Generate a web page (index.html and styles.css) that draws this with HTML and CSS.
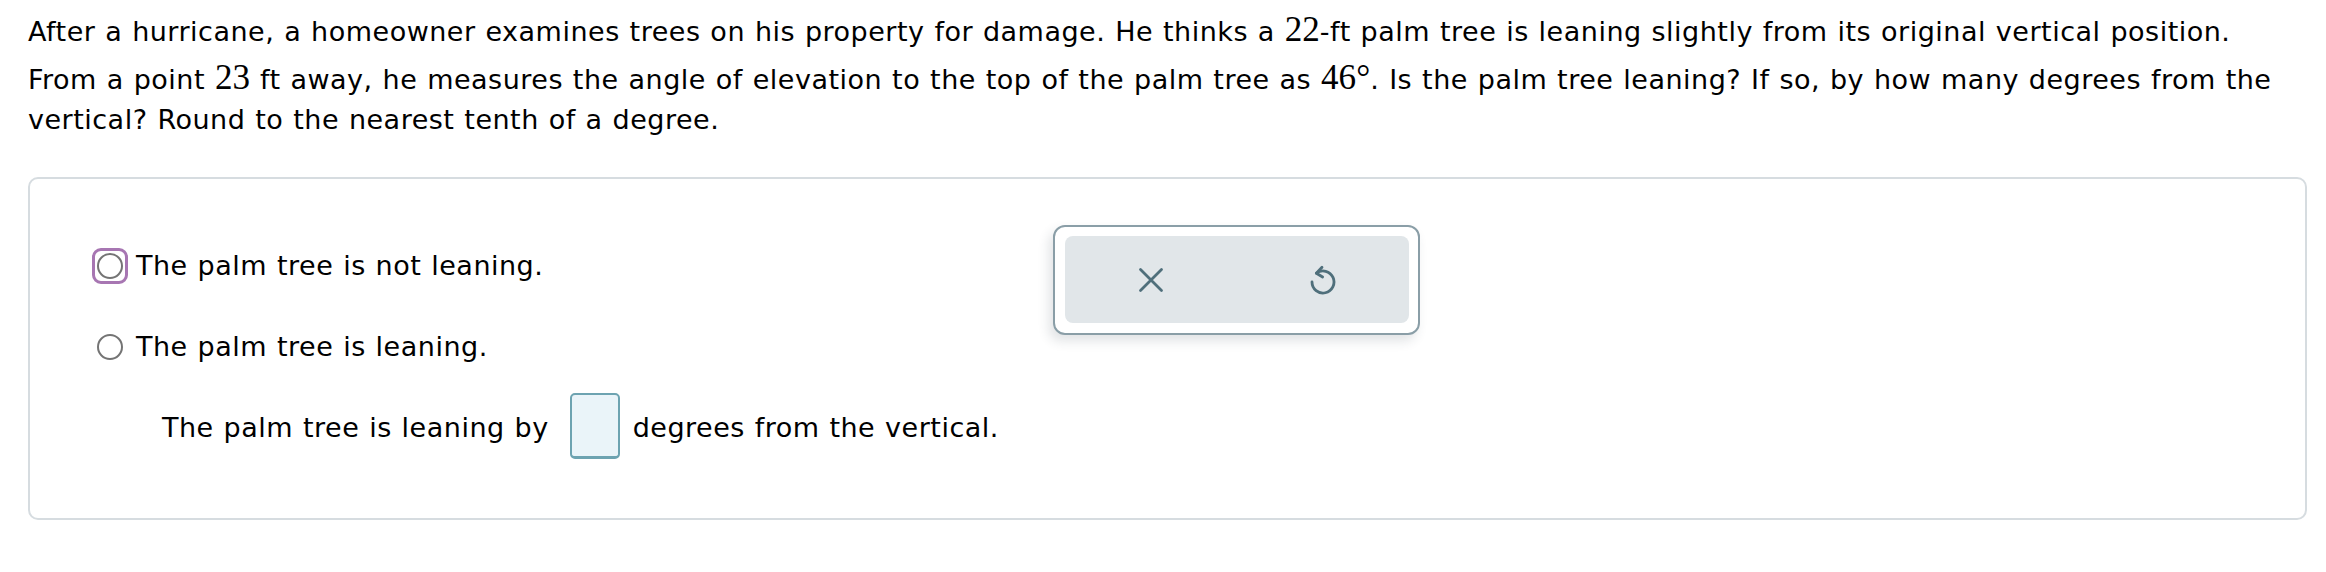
FILE: index.html
```html
<!DOCTYPE html>
<html lang="en">
<head>
<meta charset="utf-8">
<title>Palm tree question</title>
<link rel="stylesheet" href="styles.css">
</head>
<body>
<main class="page">
  <p class="question">After a hurricane, a homeowner examines trees on his property for damage. He thinks a <span class="math">22</span>-ft palm tree is leaning slightly from its original vertical position. From a point <span class="math raised">23</span> ft away, he measures the angle of elevation to the top of the palm tree as <span class="math raised">46°</span>. Is the palm tree leaning? If so, by how many degrees from the vertical? Round to the nearest tenth of a degree.</p>

  <section class="card">
    <div class="choices">
      <label class="choice">
        <span class="radio focused"><span class="circle"></span></span>
        <span class="choice-text">The palm tree is not leaning.</span>
      </label>
      <label class="choice second">
        <span class="radio"><span class="circle"></span></span>
        <span class="choice-text">The palm tree is leaning.</span>
      </label>
      <div class="answer-row">
        <span>The palm tree is leaning by</span>
        <span class="answer-box"></span>
        <span>degrees from the vertical.</span>
      </div>
    </div>

    <div class="toolbar">
      <div class="toolbar-inner">
        <button class="tool" aria-label="Clear">
          <svg width="26" height="26" viewBox="0 0 26 26"><path d="M2.5 2.5 L23.5 23.5 M23.5 2.5 L2.5 23.5" fill="none" stroke="#4f6f7b" stroke-width="2.8" stroke-linecap="round"/></svg>
        </button>
        <button class="tool" aria-label="Undo">
          <svg width="30" height="34" viewBox="0 0 30 34"><path d="M8.4 10.2 A11 11 0 1 1 4 19" fill="none" stroke="#4f6f7b" stroke-width="2.8" stroke-linecap="round"/><path d="M14 4.2 L8.4 10.2 L14.6 14" fill="none" stroke="#4f6f7b" stroke-width="2.8" stroke-linecap="round" stroke-linejoin="round"/></svg>
        </button>
      </div>
    </div>
  </section>
</main>
</body>
</html>
```

FILE: styles.css
```css
html, body {
  margin: 0;
  padding: 0;
  background: #ffffff;
}

body {
  font-family: "DejaVu Sans", Verdana, sans-serif;
  font-size: 27px;
  letter-spacing: 0.5px;
  color: #000000;
}

.page {
  padding: 12px 19px 0 28px;
}

.question {
  margin: 0;
  line-height: 40px;
  word-spacing: 0.8px;
}

.math {
  display: inline-block;
  font-family: "Liberation Serif", "Times New Roman", serif;
  font-size: 1.3em;
  line-height: 1;
  letter-spacing: 0;
  word-spacing: 0;
}

.raised {
  padding-top: 8px;
}

.card {
  margin-top: 37px;
  height: 339px;
  border: 2px solid #d6dce0;
  border-radius: 10px;
  display: flex;
  align-items: flex-start;
}

.choices {
  width: 961px;
  flex: none;
  padding: 69px 0 0 62px;
  display: flex;
  flex-direction: column;
}

.choice {
  display: flex;
  align-items: center;
  height: 36px;
  gap: 8px;
  line-height: 40px;
  word-spacing: 0.8px;
}

.choice.second {
  margin-top: 45px;
}

.radio {
  width: 36px;
  height: 36px;
  box-sizing: border-box;
  border: 3px solid transparent;
  border-radius: 9px;
  display: flex;
  align-items: center;
  justify-content: center;
  flex: none;
}

.radio.focused {
  border-color: #a776b2;
}

.circle {
  width: 26px;
  height: 26px;
  box-sizing: border-box;
  border: 2px solid #747474;
  border-radius: 50%;
  background: #ffffff;
}

.answer-row {
  margin-top: 28px;
  margin-left: 70px;
  display: flex;
  align-items: center;
  line-height: 40px;
  word-spacing: 0.8px;
}

.answer-row span:first-child,
.answer-row span:last-child {
  position: relative;
  top: 2px;
}

.answer-box {
  width: 50px;
  height: 66px;
  box-sizing: border-box;
  margin: 0 13px 0 21px;
  border: 2px solid #6da3b1;
  border-bottom-width: 3px;
  border-radius: 5px;
  background: #eaf4f9;
}

.toolbar {
  margin-top: 46px;
  width: 367px;
  height: 110px;
  box-sizing: border-box;
  border: 2px solid #8a9ea7;
  border-radius: 12px;
  padding: 9px 9px 10px 10px;
  background: #ffffff;
  box-shadow: -4px 6px 12px rgba(40, 60, 70, 0.14);
}

.toolbar-inner {
  height: 100%;
  background: #e1e6e9;
  border-radius: 8px;
  display: grid;
  grid-template-columns: 1fr 1fr;
}

.tool {
  border: 0;
  padding: 0;
  margin: 0;
  background: transparent;
  display: flex;
  align-items: center;
  justify-content: center;
}

.tool svg {
  display: block;
}
```
